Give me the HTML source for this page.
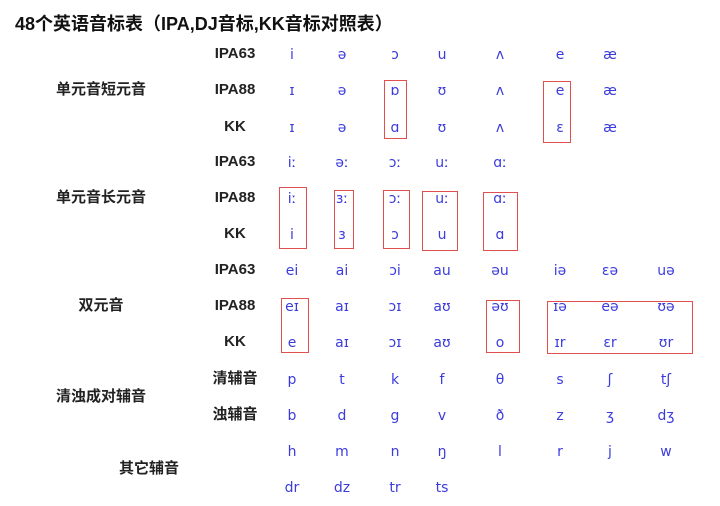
<!DOCTYPE html>
<html><head><meta charset="utf-8"><style>
body{margin:0;width:720px;height:506px;background:#fff;position:relative;overflow:hidden;font-family:"DejaVu Sans","Liberation Sans","Noto Sans CJK SC",sans-serif}
.t{position:absolute;font-weight:bold;font-size:18px;left:15px;top:10px;font-family:"Liberation Sans","Noto Sans CJK SC",sans-serif;color:#111}
.c{position:absolute;transform:translate(-50%,-50%);white-space:nowrap;line-height:18px}
.p{color:#3c3cdc;font-size:14px}
.l{font-weight:bold;font-size:15px;color:#222;font-family:"Liberation Sans","Noto Sans CJK SC",sans-serif}
.b{position:absolute;border:1.5px solid #e05050;box-sizing:border-box}
</style></head><body>
<div class="t">48个英语音标表（IPA,DJ音标,KK音标对照表）</div>
<div id="g"></div>
<div class="b" style="left:384px;top:80px;width:23px;height:59px"></div>
<div class="b" style="left:543px;top:81px;width:28px;height:62px"></div>
<div class="b" style="left:279px;top:187px;width:28px;height:62px"></div>
<div class="b" style="left:334px;top:190px;width:20px;height:59px"></div>
<div class="b" style="left:383px;top:190px;width:27px;height:59px"></div>
<div class="b" style="left:422px;top:191px;width:36px;height:60px"></div>
<div class="b" style="left:483px;top:192px;width:35px;height:59px"></div>
<div class="b" style="left:281px;top:298px;width:28px;height:55px"></div>
<div class="b" style="left:486px;top:300px;width:34px;height:53px"></div>
<div class="b" style="left:547px;top:301px;width:146px;height:53px"></div>
<script>
var X=[290,340,393,440,498,558,608,664];
var rows=[
[54,"IPA63",["i","ə","ɔ","u","ʌ","e","æ"]],
[90,"IPA88",["ɪ","ə","ɒ","ʊ","ʌ","e","æ"]],
[127,"KK",["ɪ","ə","ɑ","ʊ","ʌ","ɛ","æ"]],
[162,"IPA63",["iː","əː","ɔː","uː","ɑː"]],
[198,"IPA88",["iː","ɜː","ɔː","uː","ɑː"]],
[234,"KK",["i","ɜ","ɔ","u","ɑ"]],
[270,"IPA63",["ei","ai","ɔi","au","əu","iə","ɛə","uə"]],
[306,"IPA88",["eɪ","aɪ","ɔɪ","aʊ","əʊ","ɪə","eə","ʊə"]],
[342,"KK",["e","aɪ","ɔɪ","aʊ","o","ɪr","ɛr","ʊr"]],
[379,"清辅音",["p","t","k","f","θ","s","ʃ","tʃ"]],
[415,"浊辅音",["b","d","g","v","ð","z","ʒ","dʒ"]],
[451,"",["h","m","n","ŋ","l","r","j","w"]],
[487,"",["dr","dz","tr","ts"]]];
var h="";
function d(cls,x,y,s){h+='<div class="c '+cls+'" style="left:'+x+'px;top:'+y+'px">'+s+'</div>';}
rows.forEach(function(r){if(r[1])d("l",235,r[0],r[1]);r[2].forEach(function(s,i){d("p",X[i]+2,r[0]+1,s);});});
d("l",101,90,"单元音短元音");d("l",101,198,"单元音长元音");d("l",101,306,"双元音");
d("l",101,397,"清浊成对辅音");d("l",149,469,"其它辅音");
document.getElementById("g").innerHTML=h;
</script>
</body></html>
